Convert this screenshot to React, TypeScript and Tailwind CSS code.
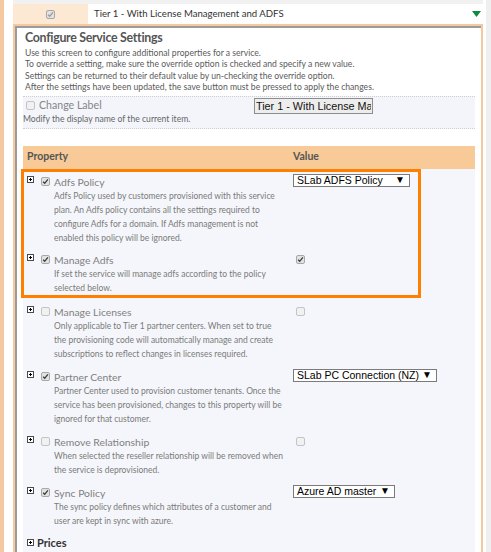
import React from 'react';

interface Row {
    label: string;
    checked: boolean;
    desc: string[];
    value: { kind: 'select'; text: string; width: string } | { kind: 'check'; checked: boolean };
    pad: string;
}

const ROWS: Row[] = [
    {
        label: 'Adfs Policy',
        checked: true,
        desc: [
            'Adfs Policy used by customers provisioned with this service',
            'plan. An Adfs policy contains all the settings required to',
            'configure Adfs for a domain. If Adfs management is not',
            'enabled this policy will be ignored.',
        ],
        value: { kind: 'select', text: 'SLab ADFS Policy', width: 'w-[117px]' },
        pad: 'pt-[6px] pb-[4px]',
    },
    {
        label: 'Manage Adfs',
        checked: true,
        desc: ['If set the service will manage adfs according to the policy', 'selected below.'],
        value: { kind: 'check', checked: true },
        pad: 'pt-[4px] pb-[6px]',
    },
    {
        label: 'Manage Licenses',
        checked: false,
        desc: [
            'Only applicable to Tier 1 partner centers. When set to true',
            'the provisioning code will automatically manage and create',
            'subscriptions to reflect changes in licenses required.',
        ],
        value: { kind: 'check', checked: false },
        pad: 'pt-[4px] pb-[5px]',
    },
    {
        label: 'Partner Center',
        checked: true,
        desc: [
            'Partner Center used to provision customer tenants. Once the',
            'service has been provisioned, changes to this property will be',
            'ignored for that customer.',
        ],
        value: { kind: 'select', text: 'SLab PC Connection (NZ)', width: 'w-[144px]' },
        pad: 'pt-[4px] pb-[5px]',
    },
    {
        label: 'Remove Relationship',
        checked: false,
        desc: ['When selected the reseller relationship will be removed when', 'the service is deprovisioned.'],
        value: { kind: 'check', checked: false },
        pad: 'pt-[4px] pb-[5px]',
    },
    {
        label: 'Sync Policy',
        checked: true,
        desc: ['The sync policy defines which attributes of a customer and', 'user are kept in sync with azure.'],
        value: { kind: 'select', text: 'Azure AD master', width: 'w-[102px]' },
        pad: 'pt-[4px] pb-[5px]',
    },
];

const Check: React.FC<{ checked: boolean; faded?: boolean }> = ({ checked, faded }) => (
    <span
        className={`flex w-[9px] h-[9px] shrink-0 items-center justify-center rounded-[2px] border ${
            checked ? 'border-[#a8a8a8] bg-[#e2e2e2]' : 'border-[#c4c4c4] bg-[#f1f1f1]'
        }`}
    >
        {checked && (
            <svg viewBox="0 0 8 8" className="w-[7px] h-[7px]">
                <path d="M1.3 4.3 L3.1 6.1 L6.7 1.5" stroke={faded ? '#9a9a9a' : '#3c3c3c'} strokeWidth="1.5" fill="none" />
            </svg>
        )}
    </span>
);

const Plus: React.FC<{ className?: string }> = ({ className }) => (
    <svg width="7" height="7" viewBox="0 0 7 7" className={`shrink-0 ${className ?? ''}`}>
        <rect x="0.5" y="0.5" width="6" height="6" fill="#fff" stroke="#4a4a4a" />
        <path d="M2 3.5h3M3.5 2v3" stroke="#000" strokeWidth="1" />
    </svg>
);

const Select: React.FC<{ text: string; width: string }> = ({ text, width }) => (
    <div
        className={`${width} h-[13px] flex items-center justify-between border border-[#7b7b7b] bg-white pl-[3px] pr-[4px] font-['Liberation_Sans',Arial,sans-serif] text-[10.5px] leading-none text-black`}
    >
        <span className="whitespace-nowrap">{text}</span>
        <span className="text-[10px]">▼</span>
    </div>
);

export default function App() {
    return (
        <div className="w-[491px] h-[552px] overflow-hidden bg-white flex font-[Lato,sans-serif]">
            <div className="w-[4px] bg-[#f4c9a2]" />
            <div className="w-[9px]" />
            <div className="w-[470px] flex flex-col">
                <div className="h-[4px] bg-[#f1f1f1]" />
                {/* selected service row */}
                <div className="h-[20px] flex">
                    <div className="w-[75px] bg-[#fde8d4] flex items-center justify-center">
                        <Check checked faded />
                    </div>
                    <div className="flex-1 flex items-center justify-between pl-[6px] pr-[2px]">
                        <span className="text-[9.6px] text-[#333] whitespace-nowrap">Tier 1 - With License Management and ADFS</span>
                        <svg width="9" height="6" viewBox="0 0 9 6">
                            <polygon points="0,0 9,0 4.5,6" fill="#0f8b3c" />
                        </svg>
                    </div>
                </div>

                {/* configure panel */}
                <div className="flex-1 flex flex-col border-x-2 border-t-2 border-[#f4c99e]">
                    <div className="flex-1 flex flex-col border-l-2 border-t-2 border-[#9b9b9b] pl-[6px] pr-[6px]">
                        <h2 className="pl-[2px] pt-[2px] text-[12.4px] leading-[16px] tracking-[-0.3px] font-bold text-[#555]">Configure Service Settings</h2>
                        <div className="pl-[2px] mt-[1px] text-[8.65px] leading-[11.4px] text-[#5a5a5a]">
                            <p>Use this screen to configure additional properties for a service.</p>
                            <p>To override a setting, make sure the override option is checked and specify a new value.</p>
                            <p>Settings can be returned to their default value by un-checking the override option.</p>
                            <p>After the settings have been updated, the save button must be pressed to apply the changes.</p>
                        </div>

                        <div className="mt-[3px] border-y border-dotted border-[#cfcfcf] bg-[#f3f5fb] pt-[1px] pb-[3px]">
                            <div className="h-[16px] flex items-center">
                                <div className="w-[231px] flex items-center pl-[3px]">
                                    <Check checked={false} />
                                    <span className="ml-[4px] text-[10.6px] text-[#858585]">Change Label</span>
                                </div>
                                <input
                                    readOnly
                                    value="Tier 1 - With License Management and ADFS"
                                    className="w-[119px] h-[16px] border border-[#8e8e8e] bg-[#ededed] px-[1px] font-['Liberation_Sans',Arial,sans-serif] text-[10.8px] text-[#111] outline-none"
                                />
                            </div>
                            <p className="text-[8.6px] leading-[11px] text-[#666]">Modify the display name of the current item.</p>
                        </div>

                        {/* property table */}
                        <div className="mt-[17px] h-[23px] flex items-center bg-[#f8ca98] text-[10.5px] font-bold text-[#555]">
                            <span className="w-[270px] pl-[4px]">Property</span>
                            <span>Value</span>
                        </div>
                        <div className="relative flex-1 bg-[#f5f6fb]">
                            {ROWS.map((row) => (
                                <div key={row.label} className={`flex ${row.pad}`}>
                                    <div className="w-[270px] flex items-start pl-[4px]">
                                        <Plus className="mt-[1px]" />
                                        <div className="ml-[7px] mt-[2px]">
                                            <Check checked={row.checked} />
                                        </div>
                                        <div className="ml-[4px]">
                                            <div className="text-[10.4px] leading-[14px] text-[#808080]">{row.label}</div>
                                            {row.desc.map((d) => (
                                                <div key={d} className="text-[8.5px] leading-[14px] text-[#7a7a7a] whitespace-nowrap">
                                                    {d}
                                                </div>
                                            ))}
                                        </div>
                                    </div>
                                    <div>
                                        {row.value.kind === 'select' ? (
                                            <div className="-mt-[1px]">
                                                <Select text={row.value.text} width={row.value.width} />
                                            </div>
                                        ) : (
                                            <div className="ml-[3px] mt-[2px]">
                                                <Check checked={row.value.checked} />
                                            </div>
                                        )}
                                    </div>
                                </div>
                            ))}
                            <div className="flex items-center pl-[4px] pt-[3px]">
                                <Plus />
                                <span className="ml-[3px] text-[11px] leading-[14px] font-bold text-[#333]">Prices</span>
                            </div>

                            {/* highlight annotation */}
                            <div className="absolute left-[-2px] top-0 w-[400px] h-[129px] border-[3px] border-[#ff8000]" />
                        </div>
                    </div>
                </div>
            </div>
            <div className="w-[3px]" />
            <div className="flex-1 bg-[#efefef]" />
        </div>
    );
}
